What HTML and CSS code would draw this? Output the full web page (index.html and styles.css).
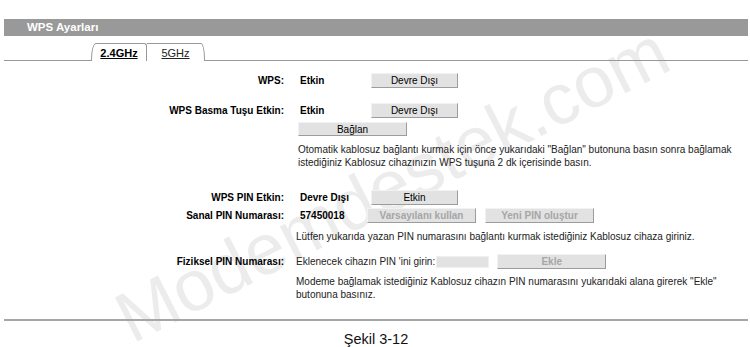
FILE: index.html
```html
<!DOCTYPE html>
<html lang="tr">
<head>
    <meta charset="UTF-8">
    <title>WPS Ayarları</title>
    <link rel="stylesheet" href="styles.css">
</head>
<body>
    <div class="watermark">Modemdestek.com</div>

    <div class="page">
        <div class="header">WPS Ayarları</div>

        <div class="tabs">
            <a class="tab tab-first active">2.4GHz</a>
            <a class="tab tab-second">5GHz</a>
        </div>

        <div class="form">
            <div class="row">
                <span class="label">WPS:</span>
                <div class="value">
                    <span class="status">Etkin</span>
                    <button class="btn">Devre Dışı</button>
                </div>
            </div>

            <div class="row row-push">
                <span class="label">WPS Basma Tuşu Etkin:</span>
                <div class="value">
                    <span class="status">Etkin</span>
                    <button class="btn">Devre Dışı</button>
                </div>
            </div>

            <div class="row row-connect">
                <span class="label"></span>
                <div class="value">
                    <button class="btn btn-wide">Bağlan</button>
                </div>
            </div>

            <div class="row row-note">
                <span class="label"></span>
                <p class="note">Otomatik kablosuz bağlantı kurmak için önce yukarıdaki "Bağlan" butonuna basın sonra bağlamak istediğiniz Kablosuz cihazınızın WPS tuşuna 2 dk içerisinde basın.</p>
            </div>

            <div class="row row-pin">
                <span class="label">WPS PIN Etkin:</span>
                <div class="value">
                    <span class="status">Devre Dışı</span>
                    <button class="btn">Etkin</button>
                </div>
            </div>

            <div class="row row-virtual">
                <span class="label">Sanal PIN Numarası:</span>
                <div class="value">
                    <span class="status status-short">57450018</span>
                    <button class="btn btn-wide" disabled>Varsayılanı kullan</button>
                    <button class="btn btn-wide btn-gap" disabled>Yeni PIN oluştur</button>
                </div>
            </div>

            <div class="row row-note2">
                <span class="label"></span>
                <p class="note note-left">Lütfen yukarıda yazan PIN numarasını bağlantı kurmak istediğiniz Kablosuz cihaza giriniz.</p>
            </div>

            <div class="row row-physical">
                <span class="label">Fiziksel PIN Numarası:</span>
                <div class="value value-left">
                    <span class="plain">Eklenecek cihazın PIN 'ini girin:</span>
                    <input type="text" class="pin-input">
                    <button class="btn btn-wide btn-add" disabled>Ekle</button>
                </div>
            </div>

            <div class="row row-note3">
                <span class="label"></span>
                <p class="note note-left">Modeme bağlamak istediğiniz Kablosuz cihazın PIN numarasını yukarıdaki alana girerek "Ekle" butonuna basınız.</p>
            </div>
        </div>

        <hr class="divider">

        <p class="caption">Şekil 3-12</p>
    </div>
</body>
</html>
```

FILE: styles.css
```css
html {
    background-color: #fff;
}

body {
    margin: 0;
    font-family: "Liberation Sans", Arial, sans-serif;
    font-size: 10px;
    color: #000;
    position: relative;
}

.watermark {
    position: absolute;
    left: 392px;
    top: 184px;
    transform: translate(-50%, -50%) rotate(-27deg);
    font-size: 72px;
    line-height: 1;
    color: #ececec;
    white-space: nowrap;
    z-index: -1;
}

.page {
    padding: 19px 2px 0 4px;
}

.header {
    height: 17px;
    line-height: 17px;
    background-color: #999;
    color: #fff;
    font-weight: bold;
    font-size: 11.5px;
    padding-left: 23px;
}

.tabs {
    display: flex;
    align-items: flex-end;
    height: 17px;
    margin-top: 7px;
    padding-left: 87px;
    border-bottom: 1px solid #999;
}

.tab {
    display: flex;
    align-items: center;
    justify-content: center;
    box-sizing: border-box;
    height: 18px;
    margin-bottom: -1px;
    background-color: #fff;
    border: 1px solid #999;
    border-bottom: none;
    color: #222;
    font-size: 11px;
    text-decoration: underline;
    padding-top: 1px;
}

.tab-first {
    width: 56px;
    border-top-left-radius: 5px 16px;
    border-top-right-radius: 3px;
}

.tab-second {
    width: 58px;
    border-left: none;
    border-top-right-radius: 4px 16px;
}

.active {
    font-weight: bold;
    color: #000;
}

.form {
    padding-top: 12px;
}

.row {
    display: flex;
    align-items: center;
}

.label {
    width: 280px;
    flex-shrink: 0;
    text-align: right;
    font-weight: bold;
}

.value {
    display: flex;
    align-items: center;
    margin-left: 14px;
}

.status {
    box-sizing: border-box;
    width: 73px;
    padding-left: 2px;
    font-weight: bold;
}

.status-short {
    width: 69px;
}

.btn {
    box-sizing: border-box;
    width: 87px;
    height: 15px;
    padding: 0;
    background-color: #e2e2e2;
    border: 1px solid;
    border-color: #f2f2f2 #9c9c9c #9c9c9c #f2f2f2;
    font-family: "Liberation Sans", Arial, sans-serif;
    font-size: 10px;
    color: #000;
}

.btn-wide {
    width: 109px;
}

.btn:disabled {
    color: #a6a6a6;
    font-weight: bold;
}

.btn-gap {
    margin-left: 9px;
}

.row-push {
    margin-top: 15px;
}

.row-connect {
    margin-top: 4px;
}

.row-connect .btn {
    height: 14px;
}

.note {
    margin: 0 0 0 14px;
    width: 446px;
    line-height: 13px;
    color: #222;
}

.note-left {
    margin-left: 12px;
}

.row-note {
    margin-top: 7px;
}

.row-pin {
    margin-top: 21px;
}

.row-virtual {
    margin-top: 3px;
}

.row-note2 {
    margin-top: 7px;
}

.row-physical {
    margin-top: 11px;
}

.value-left {
    margin-left: 12px;
}

.plain {
    color: #222;
}

.pin-input {
    box-sizing: border-box;
    width: 53px;
    height: 12px;
    margin: 0 0 0 1px;
    padding: 0;
    background-color: #e2e2e2;
    border: 1px solid #f0f0f0;
}

.btn-add {
    margin-left: 8px;
}

.row-note3 {
    margin-top: 6px;
}

.divider {
    margin: 18px 0 0 0;
    height: 0;
    border: none;
    border-top: 2px solid #a6a6a6;
}

.caption {
    margin: 10px 0 0 0;
    text-align: center;
    font-size: 14.5px;
    line-height: 17px;
    color: #111;
}
```
